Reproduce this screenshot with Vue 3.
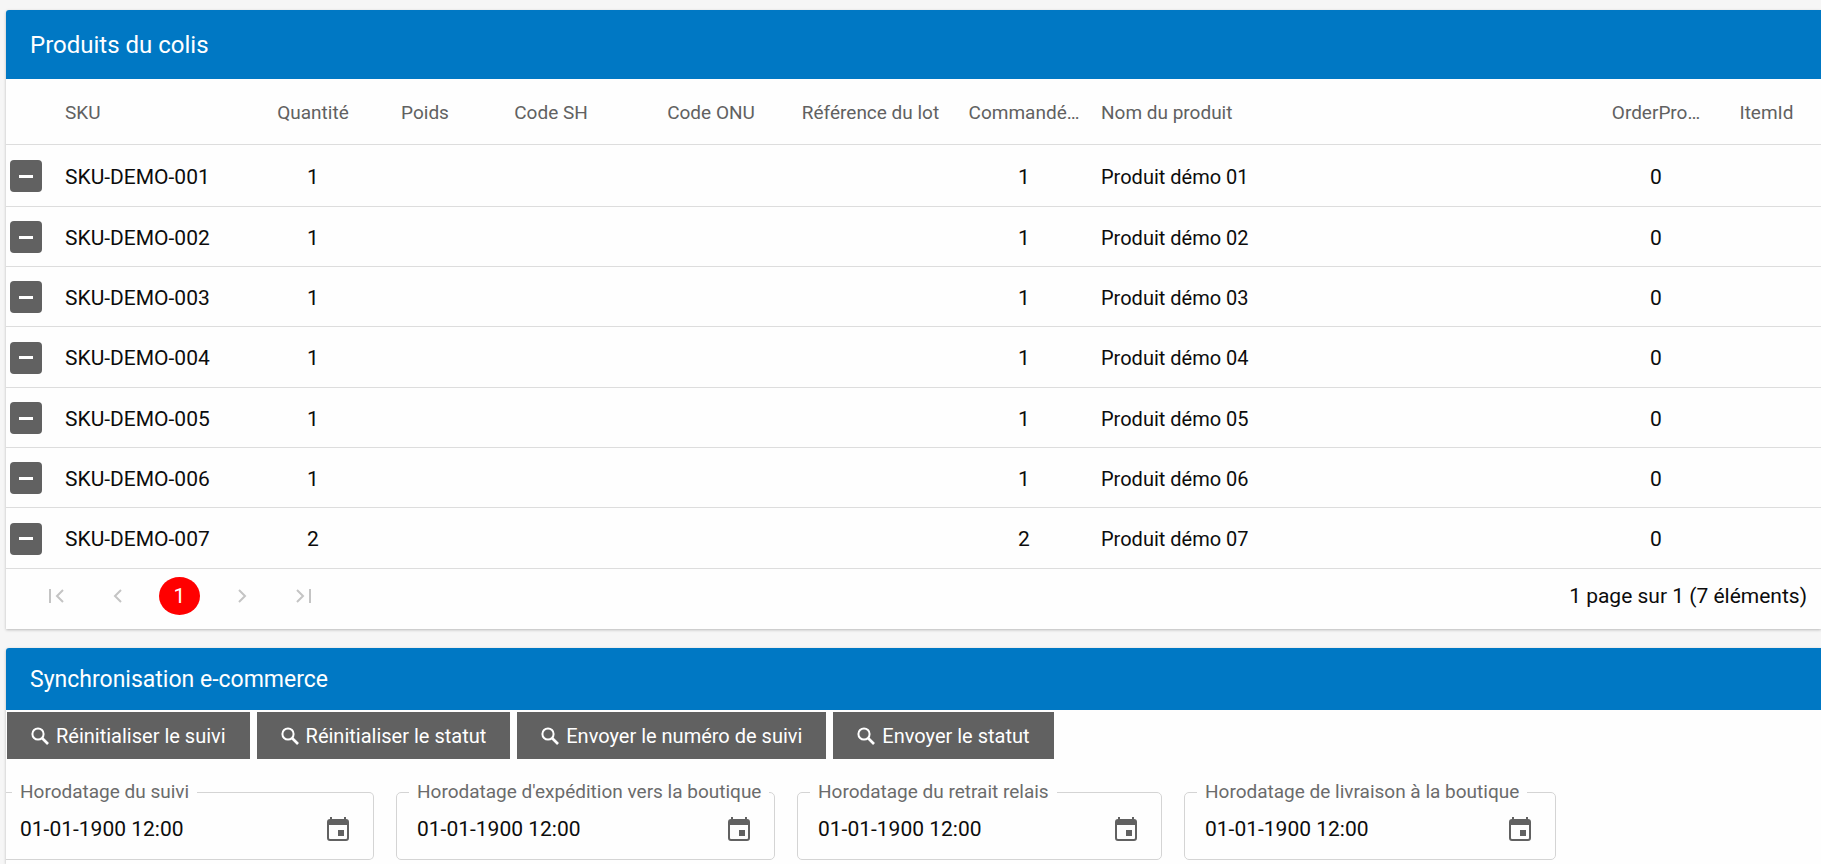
<script setup>
import { ref } from 'vue'

const columns = [
  { key: 'remove', label: '', cls: 'c-remove' },
  { key: 'sku', label: 'SKU', cls: 'c-sku' },
  { key: 'quantity', label: 'Quantité', cls: 'c-quantity center' },
  { key: 'weight', label: 'Poids', cls: 'c-weight center' },
  { key: 'hs', label: 'Code SH', cls: 'c-hs center' },
  { key: 'un', label: 'Code ONU', cls: 'c-un center' },
  { key: 'lot', label: 'Référence du lot', cls: 'c-lot center' },
  { key: 'ordered', label: 'Commandé…', cls: 'c-ordered center' },
  { key: 'name', label: 'Nom du produit', cls: 'c-name' },
  { key: 'orderProductId', label: 'OrderPro…', cls: 'c-order center' },
  { key: 'itemId', label: 'ItemId', cls: 'c-item center' }
]

const products = [1, 1, 1, 1, 1, 1, 2].map((quantity, i) => ({
  sku: `SKU-DEMO-00${i + 1}`,
  quantity,
  ordered: quantity,
  name: `Produit démo 0${i + 1}`,
  orderProductId: 0
}))

const actions = [
  'Réinitialiser le suivi',
  'Réinitialiser le statut',
  'Envoyer le numéro de suivi',
  'Envoyer le statut'
]

const stamps = ref([
  { id: 'tracking', label: 'Horodatage du suivi', value: '01-01-1900 12:00' },
  { id: 'shipped', label: "Horodatage d'expédition vers la boutique", value: '01-01-1900 12:00' },
  { id: 'pickup', label: 'Horodatage du retrait relais', value: '01-01-1900 12:00' },
  { id: 'delivered', label: 'Horodatage de livraison à la boutique', value: '01-01-1900 12:00' }
])
</script>

<template>
  <main class="page">
    <section class="card">
      <h2 class="title title-main">Produits du colis</h2>
      <table class="grid">
        <thead>
          <tr>
            <th v-for="c in columns" :key="c.key" :class="c.cls" scope="col">{{ c.label }}</th>
          </tr>
        </thead>
        <tbody>
          <tr v-for="p in products" :key="p.sku">
            <td v-for="c in columns" :key="c.key" :class="c.cls">
              <button v-if="c.key === 'remove'" class="remove" type="button" :aria-label="`Retirer ${p.sku}`">
                <svg width="14" height="3" viewBox="0 0 14 3"><rect width="14" height="3" fill="#fff" /></svg>
              </button>
              <template v-else>{{ p[c.key] }}</template>
            </td>
          </tr>
        </tbody>
      </table>
      <footer class="pager">
        <nav class="pages" aria-label="Pagination">
          <button type="button" aria-label="Première page" disabled>
            <svg width="16" height="14" viewBox="0 0 16 14"><path d="M2 0V14M15 1L9 7l6 6" /></svg>
          </button>
          <button type="button" aria-label="Page précédente" disabled>
            <svg width="16" height="14" viewBox="0 0 16 14"><path d="M11 1L5 7l6 6" /></svg>
          </button>
          <button type="button" class="current" aria-current="page">1</button>
          <button type="button" aria-label="Page suivante" disabled>
            <svg width="16" height="14" viewBox="0 0 16 14"><path d="M5 1l6 6-6 6" /></svg>
          </button>
          <button type="button" aria-label="Dernière page" disabled>
            <svg width="16" height="14" viewBox="0 0 16 14"><path d="M14 0V14M1 1l6 6-6 6" /></svg>
          </button>
        </nav>
        <span>1 page sur 1 (7 éléments)</span>
      </footer>
    </section>

    <section class="card">
      <h2 class="title title-sync">Synchronisation e-commerce</h2>
      <div class="actions">
        <button v-for="a in actions" :key="a" type="button" class="action">
          <svg width="18" height="18" viewBox="0 0 18 18" fill="none" stroke="#fff">
            <circle cx="7" cy="7" r="5.600" stroke-width="2" />
            <path d="M11 11L17 17" stroke-width="2.600" />
          </svg>
          {{ a }}
        </button>
      </div>
      <div class="stamps">
        <fieldset v-for="s in stamps" :key="s.id" class="stamp">
          <legend><label :for="s.id">{{ s.label }}</label></legend>
          <div class="control">
            <input :id="s.id" v-model="s.value" type="text" />
            <button type="button" :aria-label="`Choisir : ${s.label}`">
              <svg width="22" height="24" viewBox="0 0 22 24">
                <path
                  fill="#616161"
                  fill-rule="evenodd"
                  d="M3 0h2v2h12V0h2v2a3 3 0 0 1 3 3v16a3 3 0 0 1-3 3H3a3 3 0 0 1-3-3V5a3 3 0 0 1 3-3zM2 8v13q0 1 1 1h16q1 0 1-1V8zM11 13h6v6h-6z"
                />
              </svg>
            </button>
          </div>
        </fieldset>
      </div>
    </section>
  </main>
</template>

<style>
body {
  margin: 0;
  background: #f6f6f6;
}
</style>

<style scoped>
.page {
  display: flex;
  flex-direction: column;
  gap: 19px;
  padding: 10px 0 0 6px;
  font-family: Roboto, "Liberation Sans", sans-serif;
  font-size: 21px;
  color: #0c0c0c;
}
button,
input {
  font: inherit;
}
.card {
  background: #fefefe;
  border-top-left-radius: 3px;
  box-shadow: 0 1px 3px rgba(0, 0, 0, 0.25);
}
.title {
  display: flex;
  align-items: center;
  margin: 0;
  padding-left: 24px;
  border-top-left-radius: 3px;
  background: #0078c4;
  color: #fff;
  font-weight: 400;
}
.title-main {
  height: 69px;
  font-size: 24px;
}
.title-sync {
  height: 62px;
  font-size: 23px;
}
.grid {
  width: 100%;
  table-layout: fixed;
  border-collapse: separate;
  border-spacing: 0;
}
.grid th,
.grid td {
  box-sizing: border-box;
  height: 60px;
  padding: 2px 10px 0;
  border-bottom: 1px solid #ddd;
  font-weight: 400;
  text-align: left;
  white-space: nowrap;
}
.grid th {
  height: 66px;
  font-size: 19px;
  color: #616161;
}
.grid tbody tr:first-child td {
  height: 62px;
}
.grid tbody tr:nth-child(3n + 4) td {
  height: 61px;
}
.grid td.c-name {
  font-size: 20px;
}
.grid th.center,
.grid td.center {
  text-align: center;
}
.grid .c-remove {
  width: 49px;
  padding: 1px 4px 0;
}
.c-sku { width: 185px; }
.c-quantity { width: 146px; }
.c-weight { width: 78px; }
.c-hs { width: 174px; }
.c-un { width: 146px; }
.c-lot { width: 173px; }
.c-ordered { width: 134px; }
.c-order { width: 112px; }
.c-item { width: 109px; }
.remove {
  display: flex;
  align-items: center;
  justify-content: center;
  width: 32px;
  height: 32px;
  padding: 0;
  border: 0;
  border-radius: 4px;
  background: #616161;
}
.pager {
  box-sizing: border-box;
  display: flex;
  align-items: center;
  justify-content: space-between;
  height: 60px;
  padding: 0 14px 6px 29px;
}
.pages {
  display: flex;
  align-items: center;
  gap: 21px;
}
.pages button {
  display: flex;
  align-items: center;
  justify-content: center;
  width: 41px;
  height: 38px;
  padding: 0;
  border: 0;
  background: none;
}
.pages svg {
  fill: none;
  stroke: #c4c4c4;
  stroke-width: 2;
}
.pages .current {
  border-radius: 50%;
  background: #f00;
  color: #fff;
}
.actions {
  display: flex;
  gap: 7px;
  padding: 2px 1px 0;
}
.action {
  display: flex;
  align-items: center;
  gap: 7px;
  height: 47px;
  padding: 0 24px;
  border: 0;
  background: #616161;
  color: #fff;
  font-size: 20px;
}
.stamps {
  display: grid;
  grid-template-columns: 368fr 379fr 365fr 372fr 243fr;
  gap: 22px;
  padding: 22px 0 4px;
}
.stamp {
  min-width: 0;
  margin: 0;
  padding: 0 24px 4px 12px;
  border: 1px solid #d4d4d4;
  border-radius: 5px;
}
.stamp:first-child {
  padding-left: 6px;
  border-left: 0;
  border-top-left-radius: 0;
  border-bottom-left-radius: 0;
}
.stamp legend {
  padding: 0 8px;
  font-size: 19px;
  line-height: 22px;
  color: #6b6b6b;
  white-space: nowrap;
}
.control {
  display: flex;
  align-items: center;
  justify-content: space-between;
  height: 52px;
  padding-left: 8px;
}
.control input {
  min-width: 0;
  flex: 1;
  height: 32px;
  padding: 0;
  border: 0;
  outline: 0;
  background: none;
  color: #0c0c0c;
}
.control button {
  display: flex;
  padding: 0;
  border: 0;
  background: none;
}
</style>
